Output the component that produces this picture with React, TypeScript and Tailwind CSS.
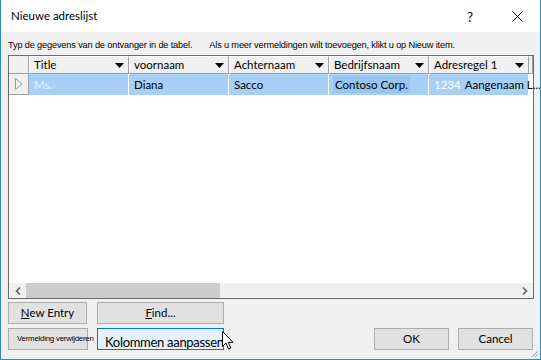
import React from "react";

const cols = [
  { name: "Title", value: "Ms.", light: true },
  { name: "voornaam", value: "Diana" },
  { name: "Achternaam", value: "Sacco" },
  { name: "Bedrijfsnaam", value: "Contoso Corp.", box: true },
  { name: "Adresregel 1", value: "Aangenaam L...", prefix: "1234" },
];

function Tri() {
  return (
    <svg width="9" height="5" viewBox="0 0 9 5" className="shrink-0">
      <path d="M0 0 H9 L4.5 5 Z" fill="#000" />
    </svg>
  );
}

export default function App() {
  return (
    <div
      className="w-[541px] h-[360px] flex flex-col border-l border-r border-b border-[#2f8cb3] bg-[#f0f0f0] overflow-hidden relative"
      style={{ fontFamily: 'Lato, "Liberation Sans", sans-serif' }}
    >
      {/* Title bar */}
      <div className="h-[32px] bg-white flex items-center shrink-0 relative">
        <span className="ml-[10px] text-[11.5px] text-black">Nieuwe adreslijst</span>
        <span className="absolute left-[466px] top-[7px] text-[13.5px] text-black">?</span>
        <svg className="absolute left-[511px] top-[11px]" width="11" height="11" viewBox="0 0 11 11">
          <path d="M0.5 0.5 L10.5 10.5 M10.5 0.5 L0.5 10.5" stroke="#000" strokeWidth="1" />
        </svg>
      </div>

      {/* Instruction */}
      <div
        className="h-[23px] flex items-end pb-[2px] pl-[7px] text-[9.2px] text-black tracking-[-0.15px] whitespace-nowrap"
        style={{ fontFamily: '"Liberation Sans", sans-serif' }}
      >
        <span>Typ de gegevens van de ontvanger in de tabel.</span>
        <span className="ml-[17px]">Als u meer vermeldingen wilt toevoegen, klikt u op Nieuw item.</span>
      </div>

      {/* Grid */}
      <div className="mx-[7px] h-[244px] border border-[#6b6b6b] bg-white flex flex-col w-[526px]">
        {/* header */}
        <div className="h-[18px] flex bg-[#f0f0f0] shrink-0">
          <div className="w-[20px] h-full border-r border-b border-[#a0a0a0] bg-[#f0f0f0]" />
          {cols.map((c) => (
            <div
              key={c.name}
              className="w-[100px] h-full border-r border-b border-[#a0a0a0] border-t border-t-white border-l border-l-white bg-[#f0f0f0] flex items-center pl-[4px] pr-[4px] text-[11.5px] text-black"
            >
              <span className="flex-1 leading-none">{c.name}</span>
              <Tri />
            </div>
          ))}
          <div className="w-[4px] h-full border-b border-[#a0a0a0] border-r border-r-[#a0a0a0] bg-[#f0f0f0]" />
        </div>
        {/* row */}
        <div className="h-[21px] flex shrink-0">
          <div className="w-[20px] h-full bg-[#f0f0f0] border-r border-b border-[#a0a0a0] flex items-center justify-center">
            <svg width="8" height="12" viewBox="0 0 8 12">
              <path d="M0.5 0.5 L7 6 L0.5 11.5 Z" fill="none" stroke="#8a9bb3" strokeWidth="1" />
            </svg>
          </div>
          {cols.map((c, i) => (
            <div
              key={c.name}
              className={
                "w-[100px] h-full border-r border-white bg-[#a8d0f6] flex items-center pl-[5px] text-[11.5px] whitespace-nowrap " +
                (i === cols.length - 1 ? "overflow-visible relative z-10" : "overflow-hidden")
              }
            >
              {c.prefix && <span className="text-white mr-[4px]">{c.prefix}</span>}
              {c.box ? (
                <span className="bg-[#99c4ef] px-[2px] -ml-[1px] text-black">{c.value}</span>
              ) : (
                <span className={c.light ? "text-[#e8f3fd]" : "text-black"}>{c.value}</span>
              )}
            </div>
          ))}
          <div className="w-[4px] h-full bg-white" />
        </div>
        <div className="flex-1" />
        {/* horizontal scrollbar */}
        <div className="h-[15px] flex items-stretch bg-[#f0f0f0] shrink-0">
          <div className="w-[17px] flex items-center justify-center">
            <svg width="6" height="8" viewBox="0 0 6 8">
              <path d="M5 0.5 L1.5 4 L5 7.5" fill="none" stroke="#606060" strokeWidth="1.6" />
            </svg>
          </div>
          <div className="w-[194px] bg-[#cdcdcd]" />
          <div className="flex-1" />
          <div className="w-[17px] flex items-center justify-center">
            <svg width="6" height="8" viewBox="0 0 6 8">
              <path d="M1 0.5 L4.5 4 L1 7.5" fill="none" stroke="#606060" strokeWidth="1.6" />
            </svg>
          </div>
        </div>
      </div>

      {/* Buttons */}
      <div className="flex gap-[10px] ml-[7px] mt-[3px]">
        <div className="w-[79px] h-[22px] bg-[#e1e1e1] border border-[#adadad] flex items-center justify-center text-[11.5px] text-black">
          <span><span className="underline">N</span>ew Entry</span>
        </div>
        <div className="w-[127px] h-[22px] bg-[#e1e1e1] border border-[#adadad] flex items-center justify-center text-[11.5px] text-black">
          <span><span className="underline">F</span>ind...</span>
        </div>
      </div>
      <div className="flex items-start ml-[7px] mt-[4px]">
        <div className="w-[80px] h-[22px] bg-[#e1e1e1] border border-[#adadad] flex items-center pl-[8px] text-[7.8px] text-black whitespace-nowrap overflow-visible relative z-10">
          <span style={{ fontFamily: '"Liberation Sans", sans-serif' }} className="tracking-[-0.2px]">Vermelding verwijderen</span>
        </div>
        <div className="ml-[9px] w-[127px] h-[22px] bg-[#e5f1fb] border border-[#0078d7] flex items-start pt-[6px] pl-[7px] text-[13px] tracking-[-0.3px] text-black whitespace-nowrap overflow-hidden leading-[14px]">
          <span>Kolommen aanpassen</span>
        </div>
        <div className="ml-[150px] w-[75px] h-[22px] bg-[#e1e1e1] border border-[#adadad] flex items-center justify-center text-[11.5px] text-black">
          OK
        </div>
        <div className="ml-[9px] w-[75px] h-[22px] bg-[#e1e1e1] border border-[#adadad] flex items-center justify-center text-[11.5px] text-black">
          Cancel
        </div>
      </div>

      {/* resize grip */}
      <svg className="absolute right-[1px] bottom-[1px]" width="8" height="8" viewBox="0 0 8 8">
        <path d="M7 1 L1 7 M7 4 L4 7" stroke="#a0a0a0" strokeWidth="1" />
      </svg>

      {/* mouse cursor */}
      <svg className="absolute left-[221px] top-[331px]" width="13" height="20" viewBox="0 0 13 20">
        <path d="M0.5 0.5 L0.5 15.5 L4 12 L6.5 18 L8.8 17 L6.3 11.3 L11 11.3 Z" fill="#fff" stroke="#000" strokeWidth="1" strokeLinejoin="round" />
      </svg>
    </div>
  );
}
